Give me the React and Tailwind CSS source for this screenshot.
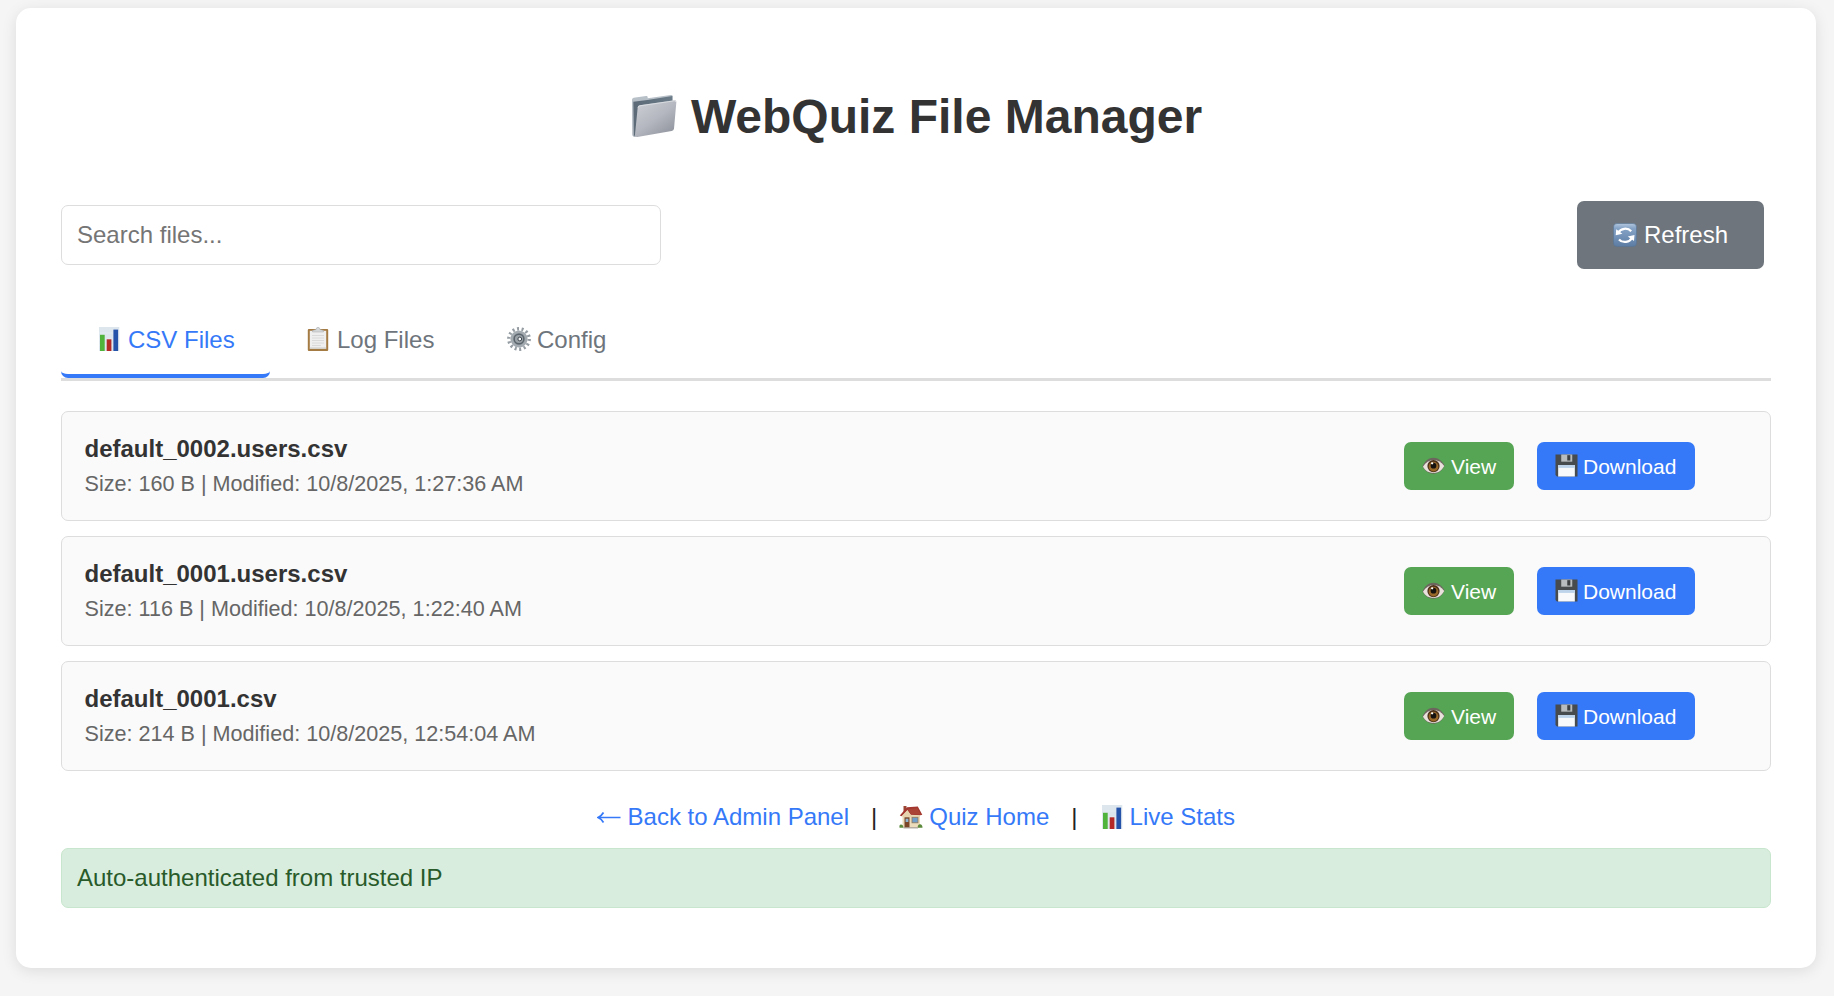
const BarChart = ({ className }) => (
  <svg viewBox="0 0 24 24" className={className}>
    <rect x="2" y="0" width="20.3" height="24" fill="#dde6ed" />
    <path d="M2 6H22.300M2 12H22.300M2 18H22.300" stroke="#e6edf2" strokeWidth="0.800" />
    <rect x="3" y="7.8" width="4.7" height="16.2" fill="#4fb33c" />
    <rect x="9.7" y="12.3" width="4.7" height="11.7" fill="#b52a26" />
    <rect x="16.4" y="2.6" width="4.7" height="21.4" fill="#2653aa" />
  </svg>
);

const Folder = ({ className }) => (
  <svg viewBox="14 14 144 144" className={className}>
    <defs>
      <linearGradient id="fback" x1="0" y1="0" x2="0" y2="1">
        <stop offset="0" stopColor="#b9c1c9" />
        <stop offset="1" stopColor="#a3abb4" />
      </linearGradient>
      <linearGradient id="fdark" x1="0" y1="0" x2="1" y2="0">
        <stop offset="0" stopColor="#5b6a76" />
        <stop offset="1" stopColor="#6b7b88" />
      </linearGradient>
      <linearGradient id="ffront" x1="0" y1="0" x2="0.8" y2="1">
        <stop offset="0" stopColor="#cfd1d7" />
        <stop offset="0.55" stopColor="#b4b7bf" />
        <stop offset="1" stopColor="#90949e" />
      </linearGradient>
    </defs>
    <path d="M20 40Q20 35 25 34L62 29Q67 28 67 33V36L136 26Q142 25 142 30V50L40 80L30 152Q21 152 21 144Z" fill="url(#fback)" />
    <path d="M24 46L66 41L141 29V48L50 64L36 100L30 151L26 146Z" fill="url(#fdark)" />
    <path d="M37 64Q37 58 43 57L147 42Q154 41 153 48L146 127Q145 133 139 134L36 152Q28 153 29 145Z" fill="url(#ffront)" />
    <path d="M38 64Q38.500 59.500 43 58.500L147 43.500Q151 43 151.500 47" fill="none" stroke="#e6e8eb" strokeWidth="2" />
  </svg>
);

const RefreshIcon = ({ className }) => (
  <svg viewBox="0 0 24 24" className={className}>
    <defs>
      <linearGradient id="rbg" x1="0" y1="0" x2="0" y2="1">
        <stop offset="0" stopColor="#b4c8de" />
        <stop offset="0.2" stopColor="#86a4c7" />
        <stop offset="1" stopColor="#5d7ca3" />
      </linearGradient>
    </defs>
    <rect x="0.500" y="0.500" width="23" height="23" rx="3.500" fill="url(#rbg)" stroke="#587494" strokeWidth="0.600" />
    <path d="M5.300 9.800A7.600 6.700 0 0 1 18.200 8.200M19 14.800A7.600 6.700 0 0 1 6 16.400" fill="none" stroke="#fff" strokeWidth="2.200" />
    <path d="M3.200 6.300L2.700 12.300L9.400 10.800ZM21 18L21.500 12L14.800 13.500Z" fill="#fff" />
  </svg>
);

const Clipboard = ({ className }) => (
  <svg viewBox="0 0 24 24" className={className}>
    <rect x="1.800" y="2" width="20.400" height="22" rx="1" fill="#a57b44" />
    <rect x="3.800" y="3.800" width="16.400" height="18" fill="#efefef" />
    <path d="M3.800 21H20.200" stroke="#c9c9c9" />
    <path d="M6 8.500H18M6 11H18M6 13.500H18M6 16H18M6 18.500H15" stroke="#dadada" strokeWidth="1" />
    <path d="M6.500 5V3.500L10 2.500Q10.300 0.300 12 0.300T14 2.500L17.500 3.500V5Z" fill="#d5d8d9" stroke="#a4a7a8" strokeWidth="0.500" />
  </svg>
);

const Gear = ({ className }) => (
  <svg viewBox="0 0 24 24" className={className}>
    <circle cx="12" cy="12" r="10.200" fill="none" stroke="#959da3" strokeWidth="3.400" strokeDasharray="2 2.578" />
    <circle cx="12" cy="12" r="7.300" fill="#8b949a" stroke="#a3abb0" strokeWidth="2.600" />
    <circle cx="12" cy="12" r="4.800" fill="#9aa2a8" stroke="#5b646b" strokeWidth="1.400" />
    <circle cx="12.800" cy="12" r="1.900" fill="#f4f5f6" stroke="#3e464d" strokeWidth="1" />
  </svg>
);

const Eye = ({ className }) => (
  <svg viewBox="0 0 24 24" className={className}>
    <path d="M0.500 13C3 7.500 7 4 12 4S21 7.500 23.500 12C21 17.500 17 20.500 12 20.500S3 17.500 0.500 13Z" fill="#6b655e" />
    <path d="M1 13.200C4 8.700 7.500 6.200 12 6.200S20.500 8.600 23.200 12.500C20.500 17.200 17 19.700 12 19.700S3.500 17.500 1 13.200Z" fill="#e9e1dc" />
    <circle cx="12" cy="12.600" r="6.400" fill="#4c3119" />
    <circle cx="12" cy="13.200" r="5" fill="#99692a" />
    <circle cx="12" cy="12.200" r="3" fill="#15110e" />
    <circle cx="10.600" cy="9.700" r="1.200" fill="#fff" />
  </svg>
);

const Floppy = ({ className }) => (
  <svg viewBox="0 0 24 24" className={className}>
    <path d="M0.500 0.500H23.500V23.500H2L0.500 22Z" fill="#484b4d" />
    <rect x="6.500" y="0.500" width="11.500" height="7.500" fill="#b9bcbe" />
    <rect x="12.800" y="1.200" width="3.200" height="5.600" fill="#3c4043" />
    <rect x="3.300" y="11.500" width="17.400" height="12" fill="#f7f9fb" />
    <rect x="3.300" y="11.500" width="17.400" height="3" fill="#bcd3e9" />
  </svg>
);

const House = ({ className }) => (
  <svg viewBox="0 0 24 24" className={className}>
    <rect x="4.500" y="1" width="3" height="6" fill="#9b4534" />
    <path d="M3.500 9.500L8 4L19 3L21 9.500V22.500H3.500Z" fill="#ecdcbc" />
    <path d="M0.800 10.500L8 2.300L18.800 1.500L23.300 9.800L21.300 10.300L11.500 9.800L8.500 5L2.600 11.300Z" fill="#a3372f" />
    <path d="M8.700 4.300L18.300 3L21.800 9.600L12 9.300Z" fill="#a94437" />
    <path d="M8.300 5.500L12.500 10.400H21V12H3.500V10.600Z" fill="#e6d3ae" />
    <rect x="5.500" y="12.300" width="5" height="10.400" fill="#7b4528" />
    <rect x="6.600" y="13.700" width="2.800" height="3.300" fill="#8fb7d3" />
    <rect x="13" y="12.300" width="6" height="5.500" fill="#6f9ecb" stroke="#92775a" strokeWidth="0.800" />
    <path d="M0.500 22.800Q0 19.500 2 19.500T4.500 22.800ZM18.700 22.800Q18.500 19.300 21 19.300T23.500 22.800Z" fill="#5c8a3c" />
    <path d="M4.500 22.800H19" stroke="#a59c90" strokeWidth="1.200" />
  </svg>
);

const ArrowLeft = ({ className }) => (
  <svg viewBox="0 0 24 24" className={className} fill="none" stroke="currentColor" strokeWidth="1.700">
    <path d="M1.500 12.500H23.500M6.500 7.500Q4.500 11 1 12.500Q4.500 14 6.500 17.500" />
  </svg>
);

const files = [
  { name: "default_0002.users.csv", meta: "Size: 160 B | Modified: 10/8/2025, 1:27:36 AM" },
  { name: "default_0001.users.csv", meta: "Size: 116 B | Modified: 10/8/2025, 1:22:40 AM" },
  { name: "default_0001.csv", meta: "Size: 214 B | Modified: 10/8/2025, 12:54:04 AM" },
];

function FileRow({ name, meta }) {
  return (
    <li className="flex h-[110px] items-center justify-between rounded-[7px] border border-[#dddddd] bg-[#fafafa] pr-[75px] pl-[22.5px]">
      <div className="pb-px">
        <div className="text-[24px] leading-[36px] font-bold text-[#333333]">{name}</div>
        <div className="text-[21.6px] leading-[34px] text-[#666666]">{meta}</div>
      </div>
      <div className="flex gap-[23px] text-[21px] text-white">
        <button className="flex h-12 w-[110px] items-center rounded-[7px] bg-[#56a554] pt-[2px] pl-[18px]">
          <Eye className="mr-[6px] mb-[4px] size-[23px] shrink-0" />
          View
        </button>
        <button className="flex h-12 w-[158px] items-center rounded-[7px] bg-[#3579f8] pt-[2px] pl-[18px]">
          <Floppy className="mr-[5px] mb-[4px] size-[23px] shrink-0" />
          Download
        </button>
      </div>
    </li>
  );
}

export default function App() {
  return (
    <div className="h-[996px] overflow-hidden bg-[#f5f5f5] pt-2 pl-4 font-['Liberation_Sans',Arial,sans-serif] text-[24px] leading-[36px] text-[#333333]">
      <main className="h-[960px] w-[1800px] rounded-[15px] bg-white px-[45px] pt-[73px] shadow-[0_3px_15px_rgba(0,0,0,0.1)]">
        <h1 className="flex h-[72px] items-center justify-center text-[48px] font-bold">
          <Folder className="mr-[13px] mb-[5px] size-[48px]" />
          WebQuiz File Manager
        </h1>
        <div className="mt-[48px] flex h-[68px] items-center justify-between pr-[7px]">
          <input
            placeholder="Search files..."
            className="h-[60px] w-[600px] rounded-[7px] border border-[#dddddd] px-[15px] outline-none placeholder:text-[#757575]"
          />
          <button className="flex h-[68px] w-[187px] items-center rounded-[7px] bg-[#6e757c] pl-[36px] text-white">
            <RefreshIcon className="mr-[7px] mb-px size-[24px]" />
            Refresh
          </button>
        </div>
        <nav className="mt-[33px] flex h-[79px] border-b-[3px] border-[#dddddd] text-[#6e757c]">
          <button className="flex w-[209px] items-center rounded-[7px] border-b-4 border-[#3579f8] pt-1 pl-[36px] text-[#3579f8]">
            <BarChart className="mr-[7px] mb-[2px] size-6" />
            CSV Files
          </button>
          <button className="flex w-[200px] items-center border-b-4 border-transparent pt-1 pl-[36px]">
            <Clipboard className="mr-[7px] mb-[2px] size-6" />
            Log Files
          </button>
          <button className="flex items-center border-b-4 border-transparent pt-1 pl-[37px]">
            <Gear className="mr-[6px] mb-[2px] size-6" />
            Config
          </button>
        </nav>
        <ul className="mt-[30px] flex flex-col gap-[15px]">
          {files.map((f) => (
            <FileRow key={f.name} {...f} />
          ))}
        </ul>
        <div className="mt-[28px] flex h-9 items-center justify-center text-[#3579f8]">
          <a className="flex items-center">
            <ArrowLeft className="mr-[6.5px] size-6" />
            Back to Admin Panel
          </a>
          <span className="mx-[22px] text-[#222222]">|</span>
          <a className="flex items-center">
            <House className="mr-[6px] mb-px size-6" />
            Quiz Home
          </a>
          <span className="mx-[22px] text-[#222222]">|</span>
          <a className="flex items-center">
            <BarChart className="mr-[6px] mb-px size-6" />
            Live Stats
          </a>
        </div>
        <div className="mt-[13px] flex h-[60px] items-center rounded-[7px] border border-[#c7e6cd] bg-[#d8eddd] px-[15px] text-[#285a2a]">
          Auto-authenticated from trusted IP
        </div>
      </main>
    </div>
  );
}
